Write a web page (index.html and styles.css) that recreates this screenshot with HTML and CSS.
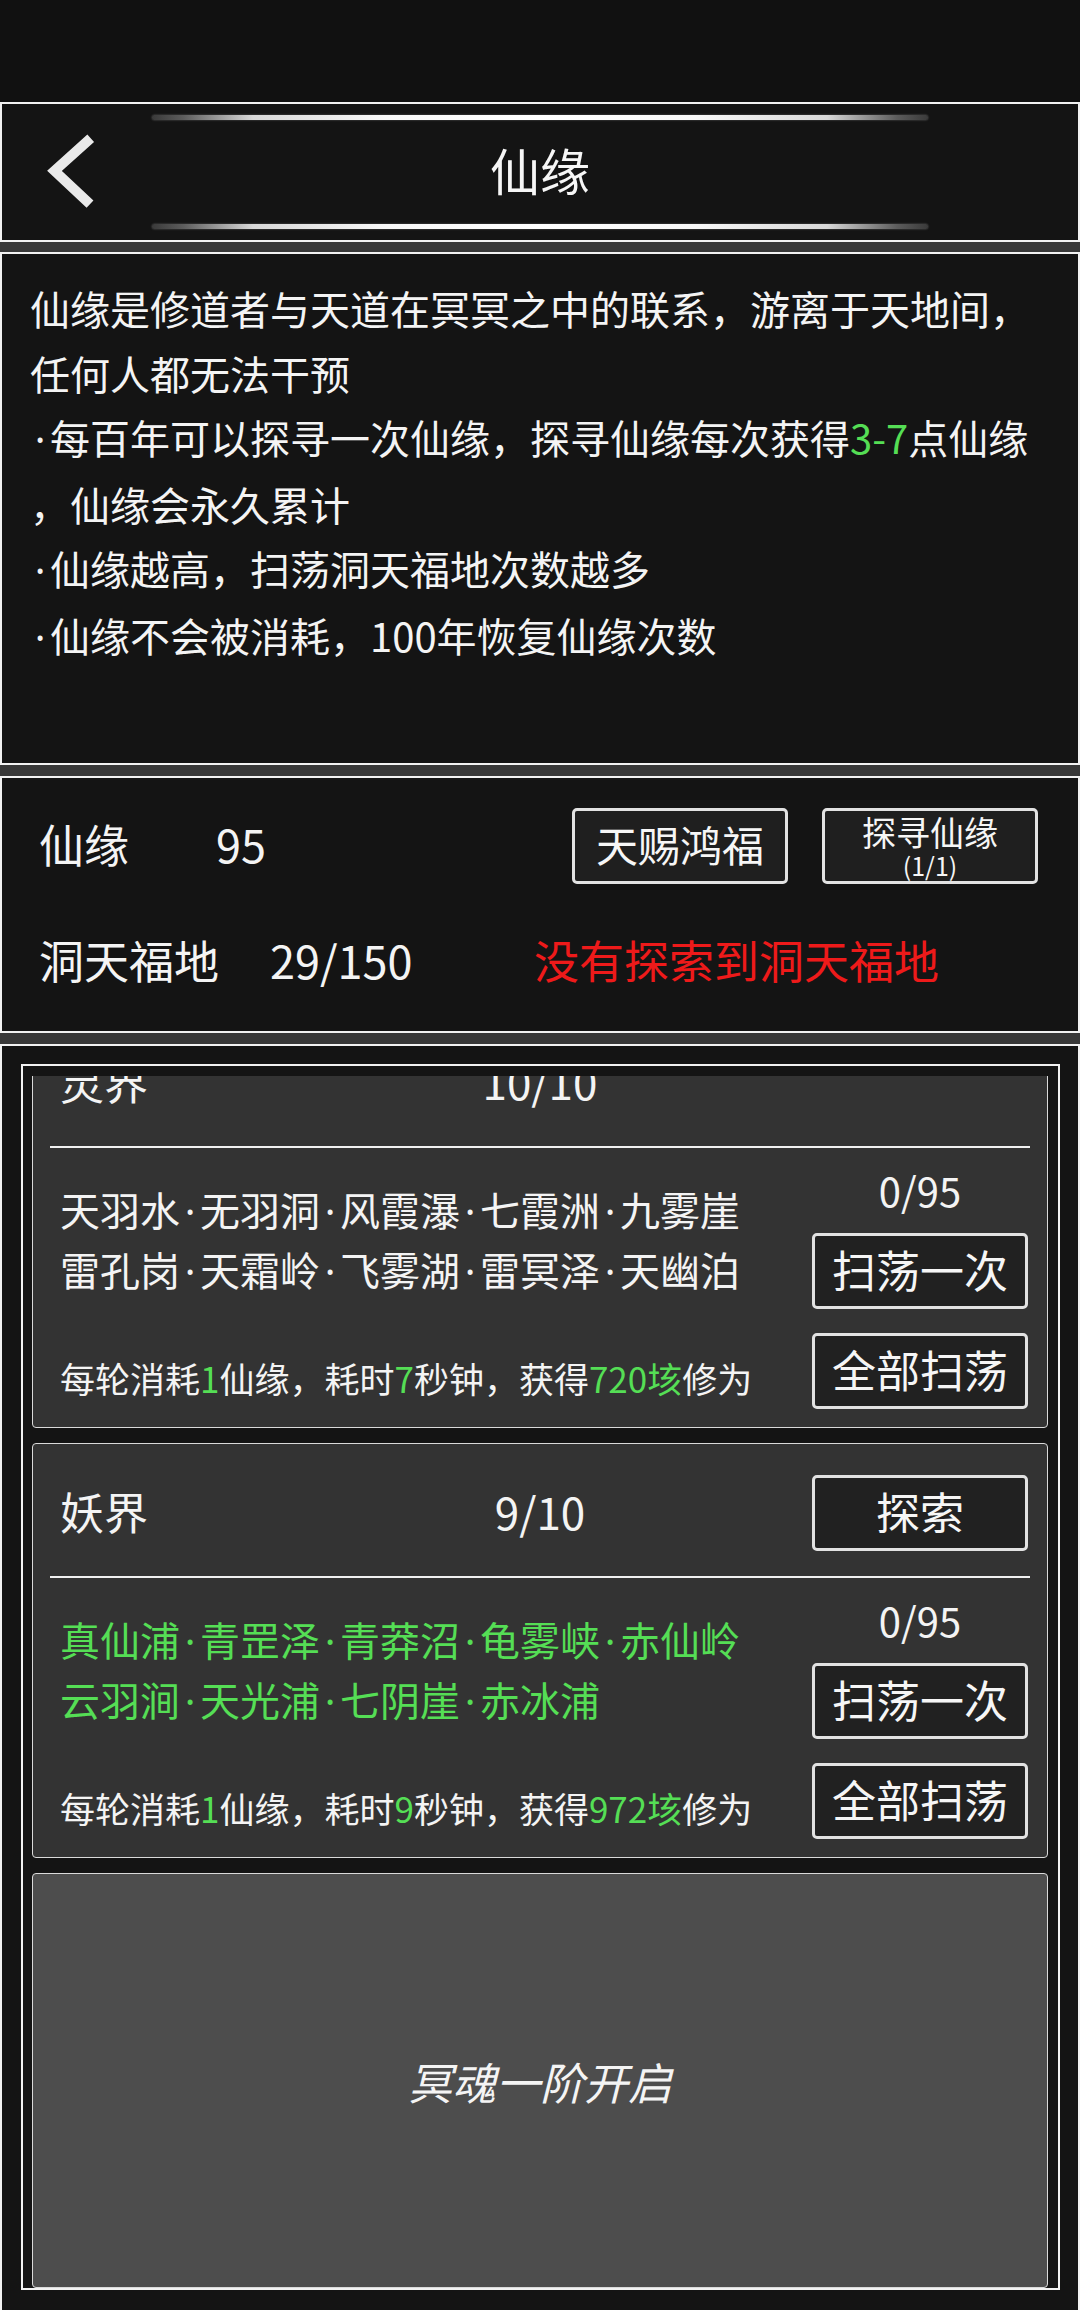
FILE: index.html
```html
<!DOCTYPE html>
<html lang="zh-CN">
<head>
<meta charset="utf-8">
<title>仙缘</title>
<link rel="stylesheet" href="styles.css">
</head>
<body>
<div class="screen">
  <div class="statusbar"></div>

  <header class="panel topbar">
    <div class="deco"></div>
    <div class="topbar-row">
      <svg class="back" viewBox="0 0 54 76" aria-hidden="true">
        <polyline points="48.7,4.2 12.5,36.8 48,70.2" />
      </svg>
      <h1 class="title">仙缘</h1>
      <span></span>
    </div>
    <div class="deco"></div>
  </header>

  <div class="gap"></div>

  <section class="panel desc">
    <p class="desc-line">仙缘是修道者与天道在冥冥之中的联系，游离于天地间，</p>
    <p class="desc-line">任何人都无法干预</p>
    <p class="desc-line"><span class="dot">·</span>每百年可以探寻一次仙缘，探寻仙缘每次获得<span class="green">3-7</span>点仙缘</p>
    <p class="desc-line">，仙缘会永久累计</p>
    <p class="desc-line"><span class="dot">·</span>仙缘越高，扫荡洞天福地次数越多</p>
    <p class="desc-line"><span class="dot">·</span>仙缘不会被消耗，100年恢复仙缘次数</p>
  </section>

  <div class="gap gap-11"></div>

  <section class="panel stats">
    <div class="stat-row">
      <span class="stat-label">仙缘</span>
      <span class="stat-val1">95</span>
      <div class="stat-btns">
        <button class="btn btn-big">天赐鸿福</button>
        <button class="btn btn-two"><span class="btn-main">探寻仙缘</span><span class="btn-sub">(1/1)</span></button>
      </div>
    </div>
    <div class="stat-row stat-row2">
      <span class="stat-label">洞天福地</span>
      <span class="stat-val2">29/150</span>
      <span class="red">没有探索到洞天福地</span>
    </div>
  </section>

  <div class="gap gap-11"></div>

  <section class="panel realms">
    <div class="frame">
      <div class="viewport">
        <article class="card card-first">
          <div class="card-head">
            <span class="card-name">灵界</span>
            <span class="card-count">10/10</span>
            <span class="head-empty"></span>
          </div>
          <div class="divider"></div>
          <div class="card-body">
            <div class="places">
              <div class="pl">天羽水<span class="dot">·</span>无羽洞<span class="dot">·</span>风霞瀑<span class="dot">·</span>七霞洲<span class="dot">·</span>九雾崖</div>
              <div class="pl">雷孔岗<span class="dot">·</span>天霜岭<span class="dot">·</span>飞雾湖<span class="dot">·</span>雷冥泽<span class="dot">·</span>天幽泊</div>
              <div class="cost">每轮消耗<span class="green">1</span>仙缘，耗时<span class="green">7</span>秒钟，获得<span class="green">720垓</span>修为</div>
            </div>
            <div class="side">
              <div class="quota">0/95</div>
              <button class="btn btn-card btn-once">扫荡一次</button>
              <button class="btn btn-card btn-all">全部扫荡</button>
            </div>
          </div>
        </article>

        <article class="card">
          <div class="card-head">
            <span class="card-name">妖界</span>
            <span class="card-count">9/10</span>
            <button class="btn btn-card btn-explore">探索</button>
          </div>
          <div class="divider"></div>
          <div class="card-body">
            <div class="places">
              <div class="pl green">真仙浦<span class="dot">·</span>青罡泽<span class="dot">·</span>青莽沼<span class="dot">·</span>龟雾峡<span class="dot">·</span>赤仙岭</div>
              <div class="pl green">云羽涧<span class="dot">·</span>天光浦<span class="dot">·</span>七阴崖<span class="dot">·</span>赤冰浦</div>
              <div class="cost">每轮消耗<span class="green">1</span>仙缘，耗时<span class="green">9</span>秒钟，获得<span class="green">972垓</span>修为</div>
            </div>
            <div class="side">
              <div class="quota">0/95</div>
              <button class="btn btn-card btn-once">扫荡一次</button>
              <button class="btn btn-card btn-all">全部扫荡</button>
            </div>
          </div>
        </article>

        <article class="card card-locked">
          <span class="locked-text">冥魂一阶开启</span>
        </article>
      </div>
    </div>
  </section>
</div>
</body>
</html>
```

FILE: styles.css
```css
* {
  box-sizing: border-box;
  margin: 0;
  padding: 0;
}

html, body {
  width: 1080px;
  height: 2310px;
  overflow: hidden;
  background: #111111;
}

body {
  font-family: "Noto Sans CJK SC", "Noto Sans", sans-serif;
  color: #f4f4f4;
  font-weight: 400;
}

.screen {
  width: 1080px;
  height: 2310px;
  overflow: hidden;
}

.statusbar {
  height: 102px;
  background: #111111;
}

.panel {
  border: 2px solid #f2f2f2;
  background: #141414;
}

.gap {
  height: 10px;
  background: #383838;
}

.gap-11 {
  height: 11px;
}

/* ---------- top bar ---------- */
.topbar {
  height: 140px;
  padding: 11px 0;
  display: flex;
  flex-direction: column;
}

.deco {
  width: 776px;
  height: 5px;
  margin: 0 auto;
  border-radius: 3px;
  background: linear-gradient(90deg, #3a3a3a 0%, #5c5c5c 4%, #d8d8d8 13%, #f8f8f8 30%, #ffffff 50%, #f8f8f8 70%, #d8d8d8 87%, #5c5c5c 96%, #3a3a3a 100%);
  box-shadow: 0 0 2px rgba(160, 160, 160, 0.6);
}

.topbar-row {
  flex: 1;
  display: grid;
  grid-template-columns: 1fr auto 1fr;
  align-items: center;
}

.back {
  margin-left: 40px;
  width: 54px;
  height: 76px;
  justify-self: start;
}

.back polyline {
  fill: none;
  stroke: #e9e9e9;
  stroke-width: 10;
  stroke-linejoin: miter;
  stroke-linecap: butt;
}

.title {
  font-size: 50px;
  font-weight: 400;
  line-height: 1;
  padding-bottom: 6px;
  color: #f6f6f6;
}

/* ---------- description ---------- */
.desc {
  height: 513px;
  padding: 22px 0 0 28px;
}

.desc-line {
  font-size: 40px;
  line-height: 64.5px;
  white-space: nowrap;
}

.dot {
  display: inline-block;
  width: 0.5em;
  text-align: center;
  font-family: "Noto Sans", "DejaVu Sans", sans-serif;
}

.green {
  color: #55de55;
}

.red {
  color: #ee1a1a;
}

/* ---------- stats ---------- */
.stats {
  height: 257px;
  padding: 30px 40px 0 37px;
}

.stat-row {
  display: flex;
  align-items: center;
  height: 76px;
  font-size: 45px;
  line-height: 60px;
}

.stat-row2 {
  margin-top: 48px;
  height: 60px;
}

.stat-label,
.stat-val1,
.stat-val2,
.red {
  padding-bottom: 4px;
}

.stat-val1 {
  margin-left: 87px;
}

.stat-val2 {
  margin-left: 51px;
  width: 264px;
}

.stat-btns {
  margin-left: auto;
  display: flex;
  gap: 34px;
}

.btn {
  font-family: "Noto Sans CJK SC", "Noto Sans", sans-serif;
  color: #f6f6f6;
  background: #1f1f1f;
  border: 3px solid #e2e2e2;
  border-radius: 5px;
  width: 216px;
  height: 76px;
  display: flex;
  flex-direction: column;
  align-items: center;
  justify-content: center;
  font-weight: 400;
}

.btn-big {
  font-size: 42px;
  line-height: 1;
  padding-bottom: 4px;
}

.btn-two {
  padding-bottom: 2px;
}

.btn-main {
  font-size: 34px;
  line-height: 40px;
}

.btn-sub {
  font-size: 25px;
  line-height: 27px;
}

/* ---------- realms ---------- */
.realms {
  height: 1300px;
}

.frame {
  margin: 18px 18px 0 19px;
  border: 2px solid #f2f2f2;
  padding: 10px 10px 0 9px;
}

.viewport {
  height: 1212px;
  overflow: hidden;
  display: flex;
  flex-direction: column;
  gap: 15px;
}

.card {
  flex: none;
  height: 415px;
  border: 1px solid #dadada;
  border-radius: 4px;
  background: #333333;
  display: flex;
  flex-direction: column;
}

.card-first {
  margin-top: -63px;
}

.card-head {
  margin-top: 31px;
  height: 76px;
  display: grid;
  grid-template-columns: 1fr auto 1fr;
  align-items: center;
  padding: 0 19px;
  font-size: 44px;
  line-height: 60px;
}

.card-name {
  justify-self: start;
  margin-left: 8px;
  padding-bottom: 5px;
}

.card-count {
  padding-bottom: 5px;
}

.head-empty {
  justify-self: end;
  width: 216px;
  height: 76px;
}

.card-head .btn {
  justify-self: end;
}

.btn-card {
  background: #212121;
  font-size: 44px;
  line-height: 1;
  padding-bottom: 5px;
}

.divider {
  margin: 25px 17px 0;
  height: 2px;
  background: #f0f0f0;
}

.card-body {
  display: grid;
  grid-template-columns: 1fr 216px;
  padding: 0 19px 0 27px;
}

.places {
  padding-top: 32px;
}

.pl {
  font-size: 40px;
  line-height: 59px;
  white-space: nowrap;
}

.cost {
  margin-top: 58px;
  font-size: 35px;
  line-height: 40px;
  white-space: nowrap;
}

.side {
  padding-top: 20px;
  display: flex;
  flex-direction: column;
}

.quota {
  font-size: 40px;
  line-height: 44px;
  text-align: center;
}

.btn-once {
  margin-top: 21px;
}

.btn-all {
  margin-top: 24px;
}

.card-locked {
  background: #4d4d4d;
  align-items: center;
  justify-content: center;
}

.locked-text {
  font-size: 44px;
  font-style: italic;
  color: #f4f4f4;
}
```
